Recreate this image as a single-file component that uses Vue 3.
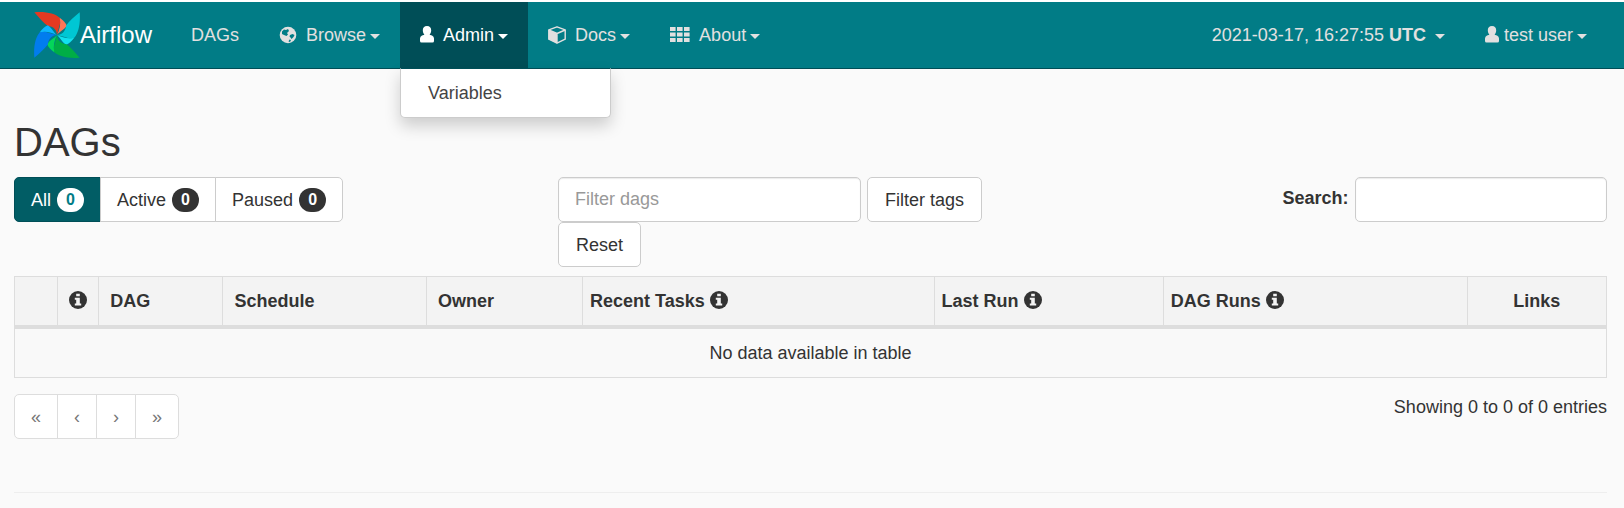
<script setup>
import { ref } from 'vue'

const blades = [
  { angle: 0, main: '#e43921', fold: '#ff7557' },
  { angle: 90, main: '#00c7d4', fold: '#11e1ee' },
  { angle: 180, main: '#00ad46', fold: '#04d659' },
  { angle: 270, main: '#017cee', fold: '#0cb6ff' },
]
const menus = [
  { label: 'Browse', icon: 'globe', width: 18 },
  { label: 'Admin', icon: 'user', width: 14, items: ['Variables'] },
  { label: 'Docs', icon: 'cube', width: 18 },
  { label: 'About', icon: 'grid', width: 20 },
]
const openMenu = ref('Admin')
const states = ['All', 'Active', 'Paused']
const state = ref('All')
const filter = ref('')
const search = ref('')
const columns = [
  { key: 'toggle', label: '' },
  { key: 'info', label: '', info: true },
  { key: 'dag', label: 'DAG', sortable: true },
  { key: 'schedule', label: 'Schedule', sortable: true },
  { key: 'owner', label: 'Owner', sortable: true },
  { key: 'tasks', label: 'Recent Tasks', info: true },
  { key: 'last', label: 'Last Run', info: true },
  { key: 'runs', label: 'DAG Runs', info: true },
  { key: 'links', label: 'Links' },
]
const pages = [
  { glyph: '«', name: 'First page' },
  { glyph: '‹', name: 'Previous page' },
  { glyph: '›', name: 'Next page' },
  { glyph: '»', name: 'Last page' },
]
const userPath = 'M7 0C9.800 0 11.200 1.900 11.200 4.300C11.200 6 10.600 7.800 9.600 8.800L12 9.400Q14 10.200 14 12.500V15Q14 16.500 12.500 16.500H1.500Q0 16.500 0 15V12.500Q0 10.200 2 9.400L4.400 8.800C3.400 7.800 2.800 6 2.800 4.300C2.800 1.900 4.200 0 7 0Z'
function toggle(label) {
  openMenu.value = openMenu.value === label ? '' : label
}
</script>

<template>
  <nav class="navbar">
    <a class="brand" href="#">
      <svg class="logo" viewBox="30 39 136 136" aria-hidden="true">
        <g v-for="b in blades" :key="b.angle" :transform="`rotate(${b.angle} 98 107)`">
          <path :fill="b.main" d="M31 40C66 37 92 44 106 56Q110 68 104 84L98 107C97 92 88 82 70 80C58 71 45 57 31 40Z" />
          <path :fill="b.fold" d="M106 56C117 64 124 72 127 80C118 93 107 96 98 107C106 91 110 74 106 56Z" />
        </g>
      </svg>
      <span>Airflow</span>
    </a>
    <a class="nav-link" href="#">DAGs</a>
    <div v-for="m in menus" :key="m.label" class="menu">
      <button class="nav-link" :class="{ open: openMenu === m.label }" type="button" :aria-expanded="openMenu === m.label" @click="toggle(m.label)">
        <svg class="icon" :width="m.width" height="18" :viewBox="`0 0 ${m.width} 18`" aria-hidden="true">
          <template v-if="m.icon === 'globe'">
            <circle cx="9" cy="9" r="8.300" fill="currentColor" />
            <path class="cut" d="M3 5.500L5 3.500L7 4L9 3L10 5L8 7L9 8.500L7.500 10L5 9L3 8ZM11 9L13.500 8L15.500 9L14.500 11L12.500 13L11.500 11.500L10.500 10.500ZM10.500 13.500L12 14L11 16L9.500 15.500Z" />
          </template>
          <path v-else-if="m.icon === 'user'" fill="currentColor" :d="userPath" />
          <template v-else-if="m.icon === 'cube'">
            <path fill="none" stroke="currentColor" stroke-width="1.400" stroke-linejoin="round" d="M9 .8L17.200 3.800V13.200L9 17.200L.8 13.200V3.800Z" />
            <path fill="currentColor" d="M9 7.500L.8 4V13.300L9 17.200Z" />
            <path fill="none" stroke="currentColor" stroke-width="1.400" stroke-linejoin="round" d="M.8 4L9 7.500L17.200 4M9 7.500V17" />
          </template>
          <path v-else fill="currentColor" d="M0 1h5.600v4H0zM7 1h5.600v4H7zM14 1h5.600v4H14zM0 6.500h5.600v4H0zM7 6.500h5.600v4H7zM14 6.500h5.600v4H14zM0 12h5.600v4H0zM7 12h5.600v4H7zM14 12h5.600v4H14z" />
        </svg>
        <span class="label">{{ m.label }}</span>
        <span class="caret"></span>
      </button>
      <div v-if="m.items && openMenu === m.label" class="dropdown">
        <a v-for="i in m.items" :key="i" href="#">{{ i }}</a>
      </div>
    </div>
    <div class="nav-right">
      <button class="nav-link clock" type="button">
        <span>2021-03-17, 16:27:55 <strong>UTC</strong></span>
        <span class="caret"></span>
      </button>
      <button class="nav-link account" type="button">
        <svg class="icon" width="14" height="18" viewBox="0 0 14 18" aria-hidden="true">
          <path fill="currentColor" :d="userPath" />
        </svg>
        <span class="label">test user</span>
        <span class="caret"></span>
      </button>
    </div>
  </nav>

  <main class="page">
    <h1>DAGs</h1>
    <div class="toolbar">
      <div class="states">
        <button v-for="s in states" :key="s" class="btn" :class="{ active: state === s }" type="button" @click="state = s">
          {{ s }}<span class="badge">0</span>
        </button>
      </div>
      <form class="filters" @submit.prevent>
        <input v-model="filter" class="field" type="text" placeholder="Filter dags" aria-label="Filter dags" />
        <button class="btn" type="submit">Filter tags</button>
        <button class="btn" type="reset">Reset</button>
      </form>
      <div class="search">
        <label for="search">Search:</label>
        <input id="search" v-model="search" class="field" type="search" />
      </div>
    </div>

    <table>
      <colgroup>
        <col v-for="c in columns" :key="c.key" :class="`col-${c.key}`" />
      </colgroup>
      <thead>
        <tr>
          <th v-for="c in columns" :key="c.key" scope="col" :class="[`th-${c.key}`, { sortable: c.sortable }]">
            {{ c.label }}
            <svg v-if="c.info" class="info" viewBox="0 0 18 18" aria-hidden="true">
              <circle cx="9" cy="9" r="9" fill="currentColor" />
              <path fill="#f3f3f3" d="M7.200 2.700h3.600v2.600H7.200zM5.800 6.700h5v5.800h1.400v2H5.800v-2h1.400V8.700H5.800z" />
            </svg>
          </th>
        </tr>
      </thead>
      <tbody>
        <tr><td :colspan="columns.length">No data available in table</td></tr>
      </tbody>
    </table>

    <div class="footer-row">
      <div class="pagination">
        <button v-for="p in pages" :key="p.name" class="btn" type="button" :aria-label="p.name">{{ p.glyph }}</button>
      </div>
      <div class="summary">Showing 0 to 0 of 0 entries</div>
    </div>
    <hr />
  </main>
</template>

<style>
body {
  margin: 0;
  background: #fafafa;
}
</style>

<style scoped>
.navbar,
.page,
button,
input {
  font-family: "Liberation Sans", Arial, sans-serif;
  font-size: 18px;
  line-height: 26px;
  color: #333;
}
.navbar,
.navbar *,
.page,
.page * {
  box-sizing: border-box;
}
.navbar {
  display: flex;
  align-items: stretch;
  padding: 0 17px 0 34px;
  border-top: 2px solid #fff;
  border-bottom: 1px solid #004e57;
  background: #017c86;
}
.brand {
  display: flex;
  align-items: center;
  padding-right: 19px;
  color: #fff;
  font-size: 24px;
  text-decoration: none;
}
.logo {
  width: 46px;
  height: 46px;
}
.nav-link {
  display: flex;
  align-items: center;
  height: 66px;
  padding: 0 20px;
  border: 0;
  background: none;
  color: #e2e0e0;
  text-decoration: none;
  white-space: nowrap;
  cursor: pointer;
}
.nav-link.open {
  background: #004e57;
  color: #fff;
}
.icon {
  flex: none;
  margin-right: 9px;
}
.account .icon {
  margin-right: 5px;
}
.cut {
  fill: #017c86;
}
.caret {
  margin: 3px 0 0 4px;
  border-top: 5px solid currentColor;
  border-left: 5px solid transparent;
  border-right: 5px solid transparent;
}
.clock .caret {
  margin-left: 9px;
}
.menu {
  position: relative;
}
.dropdown {
  position: absolute;
  z-index: 10;
  top: 100%;
  left: 0;
  width: 211px;
  padding: 9px 0;
  border: 1px solid #ccc;
  border-top-color: #004e57;
  border-radius: 0 0 5px 5px;
  background: #fff;
  box-shadow: 0 8px 16px rgba(0, 0, 0, 0.18);
}
.dropdown a {
  display: block;
  padding: 2px 27px;
  color: #444;
  text-decoration: none;
}
.nav-right {
  display: flex;
  margin-left: auto;
}
.page {
  padding: 0 17px 0 14px;
}
h1 {
  margin: 0;
  padding: 51px 0 13px;
  font-size: 40px;
  line-height: 44px;
  font-weight: 400;
}
.toolbar {
  display: grid;
  grid-template-columns: 1fr 1fr 1fr;
  gap: 39px;
  align-items: start;
}
.btn {
  height: 45px;
  padding: 0 16px;
  border: 1px solid #ccc;
  border-radius: 5px;
  background: #fff;
  cursor: pointer;
}
.states,
.pagination {
  display: flex;
}
.states .btn,
.pagination .btn {
  margin-left: -1px;
  border-radius: 0;
}
.states .btn {
  display: flex;
  align-items: center;
  gap: 6px;
}
.states .btn:first-child,
.pagination .btn:first-child {
  margin-left: 0;
  border-radius: 5px 0 0 5px;
}
.states .btn:last-child,
.pagination .btn:last-child {
  border-radius: 0 5px 5px 0;
}
.states .btn.active {
  border-color: #004e57;
  background: #015d65;
  color: #fff;
}
.badge {
  min-width: 27px;
  height: 24px;
  border-radius: 12px;
  background: #333;
  color: #fff;
  font-size: 16px;
  font-weight: 700;
  line-height: 24px;
  text-align: center;
}
.active .badge {
  background: #fff;
  color: #017c86;
}
.filters {
  display: flex;
  flex-wrap: wrap;
  column-gap: 6px;
}
.filters .btn {
  padding: 0 17px;
}
.field {
  height: 45px;
  padding: 0 16px;
  border: 1px solid #ccc;
  border-radius: 5px;
  background: #fff;
  box-shadow: inset 0 1px 1px rgba(0, 0, 0, 0.08);
}
.field::placeholder {
  color: #999;
  opacity: 1;
}
.filters .field {
  width: 60%;
}
.search {
  display: flex;
  justify-content: flex-end;
  gap: 6px;
}
.search label {
  padding-top: 8px;
  font-weight: 700;
}
.search .field {
  width: 50%;
}
table {
  width: 100%;
  margin-top: 9px;
  border: 1px solid #ddd;
  border-spacing: 0;
  table-layout: fixed;
}
th {
  height: 52px;
  padding: 0 7px;
  border-bottom: 4px solid #ddd;
  border-right: 1px solid #ddd;
  background: #f3f3f3;
  text-align: left;
  white-space: nowrap;
}
th:last-child {
  border-right: 0;
}
.th-info {
  padding: 0 11px;
}
.th-links {
  text-align: center;
}
th.sortable {
  padding-left: 11px;
}
td {
  height: 48px;
  padding: 0;
  background: #f9f9f9;
  text-align: center;
}
.info {
  width: 18px;
  height: 18px;
  vertical-align: -2px;
}
.col-toggle { width: 2.7%; }
.col-info { width: 2.6%; }
.col-dag { width: 7.8%; }
.col-schedule { width: 12.8%; }
.col-owner { width: 9.8%; }
.col-tasks { width: 22.1%; }
.col-last { width: 14.4%; }
.col-runs { width: 19.1%; }
.col-links { width: 8.7%; }
.footer-row {
  display: flex;
  justify-content: space-between;
  align-items: flex-start;
  margin-top: 16px;
}
.pagination .btn {
  border-color: #ddd;
  color: #777;
}
hr {
  margin: 53px 0 0;
  border: 0;
  border-top: 1px solid #eee;
}
</style>
